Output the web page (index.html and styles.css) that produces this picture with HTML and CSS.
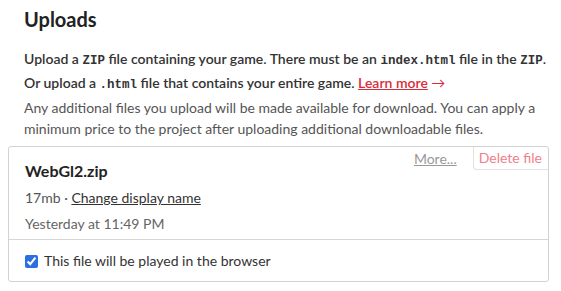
FILE: index.html
```html
<!DOCTYPE html>
<html>
<head>
<meta charset="utf-8">
<link rel="stylesheet" href="styles.css">
</head>
<body>
<section class="uploads">
  <h2 class="title">Uploads</h2>
  <p class="info">Upload a <code>ZIP</code> file containing your game. There must be an <code>index.html</code> file in the <code>ZIP</code>. Or upload a <code>.html</code> file that contains your entire game. <a class="learn" href="#">Learn more</a> <span class="arrow">→</span></p>
  <p class="sub">Any additional files you upload will be made available for download. You can apply a minimum price to the project after uploading additional downloadable files.</p>
  <div class="card">
    <div class="card-main">
      <div class="actions">
        <a class="more" href="#">More...</a>
        <span class="delete">Delete file</span>
      </div>
      <div class="fname">WebGl2.zip</div>
      <div class="meta">17mb · <a class="rename" href="#">Change display name</a></div>
      <div class="date">Yesterday at 11:49 PM</div>
    </div>
    <label class="card-foot"><input type="checkbox" class="check" checked> This file will be played in the browser</label>
  </div>
</section>
</body>
</html>
```

FILE: styles.css
```css
html, body {
  margin: 0;
  padding: 0;
  background: #fff;
}
body {
  font-family: Lato, "Open Sans", sans-serif;
  color: #333;
}
.uploads {
  padding: 6px 12px 0 8px;
}
.title {
  margin: 0 0 0 16px;
  font-size: 20px;
  line-height: 26px;
  font-weight: 700;
  color: #222;
}
.info {
  margin: 16px -10px 0 16px;
  font-size: 14px;
  line-height: 22px;
  font-weight: 600;
  color: #333;
}
.info code {
  font-family: "Liberation Mono", "DejaVu Sans Mono", monospace;
  font-size: 12.5px;
  font-weight: 700;
  color: #333;
}
.learn {
  color: #da2b3a;
  text-decoration: underline;
}
.arrow {
  color: #da2b3a;
  font-weight: 400;
}
.sub {
  margin: 1px 0 0 16px;
  font-size: 14px;
  line-height: 21px;
  color: #555;
}
.card {
  margin-top: 7px;
  border: 1px solid #d2d2d2;
  border-radius: 3px;
}
.card-main {
  position: relative;
  padding: 14px 16px 6px;
  border-bottom: 1px solid #d6d6d6;
}
.actions {
  position: absolute;
  top: 0;
  right: 0;
  display: flex;
  align-items: center;
  gap: 16px;
  font-size: 14px;
}
.more {
  color: #999;
  text-decoration: underline;
}
.delete {
  color: #f0808a;
  padding: 2px 6px 3px 5px;
  border-left: 1px solid #e2e2e2;
  border-bottom: 1px solid #e2e2e2;
  border-bottom-left-radius: 4px;
  line-height: 17px;
}
.fname {
  font-size: 16px;
  font-weight: 700;
  color: #222;
  line-height: 20px;
}
.meta {
  margin-top: 8px;
  font-size: 14px;
  line-height: 18px;
  color: #555;
}
.rename {
  color: #333;
  text-decoration: underline;
}
.date {
  margin-top: 8px;
  font-size: 14px;
  line-height: 18px;
  color: #666;
}
.card-foot {
  display: flex;
  align-items: center;
  gap: 6px;
  padding: 11px 16px 10px;
  font-size: 14px;
  line-height: 20px;
  color: #333;
}
.check {
  margin: 0;
  width: 13px;
  height: 13px;
  accent-color: #2b6fe0;
}
```
